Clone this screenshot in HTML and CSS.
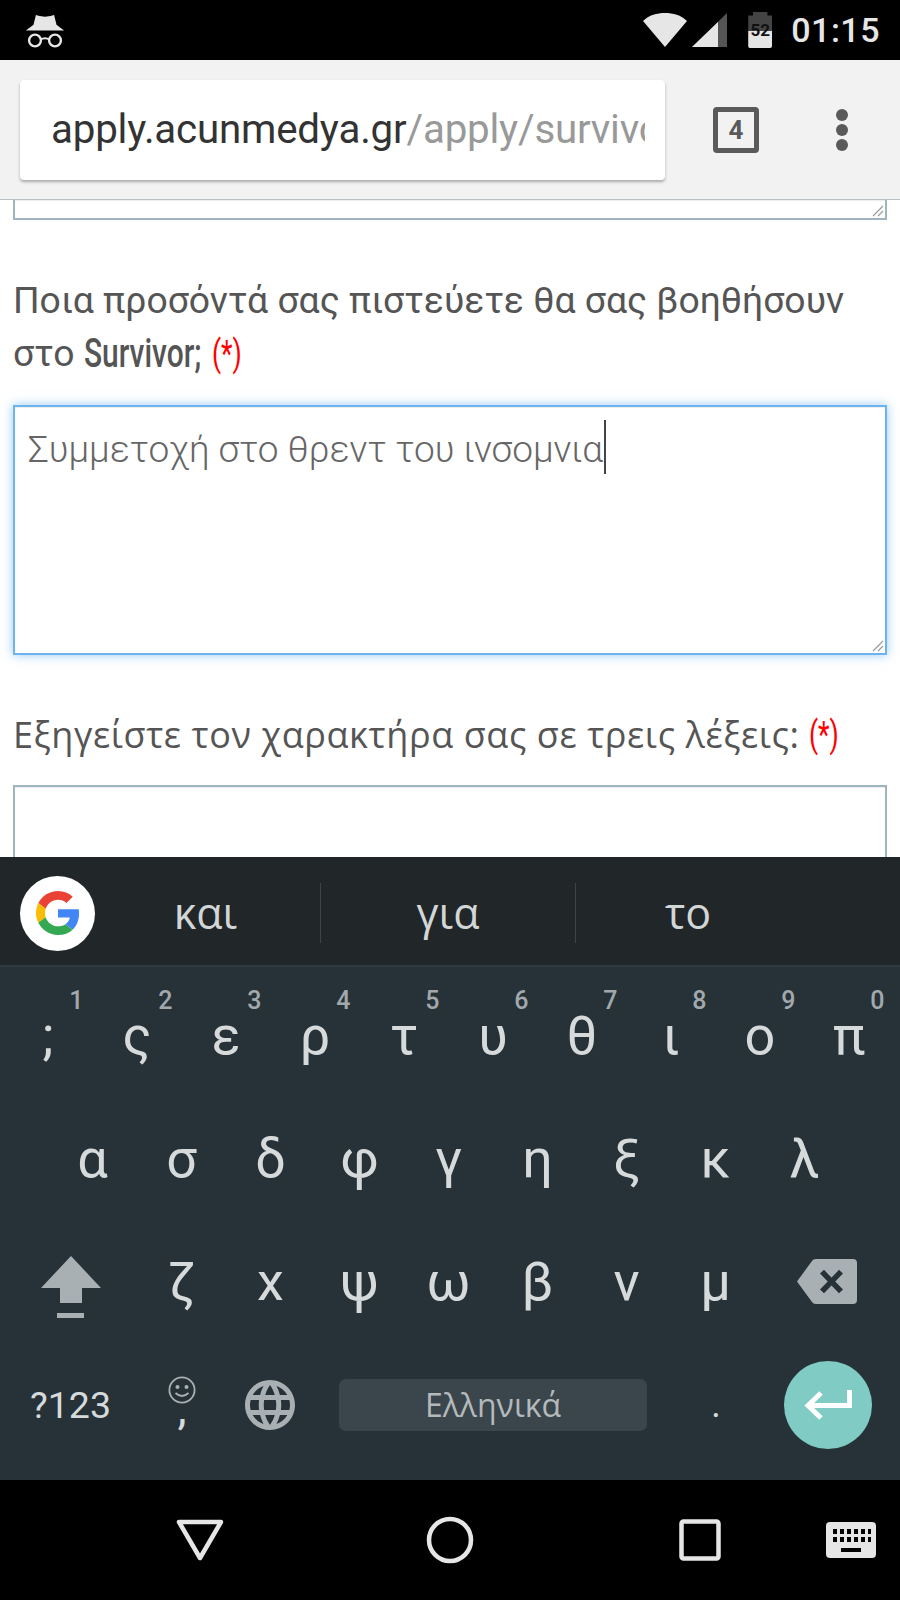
FILE: index.html
```html
<!DOCTYPE html>
<html>
<head>
    <meta charset="utf-8">
    <title>apply.acunmedya.gr</title>
    <link rel="stylesheet" href="styles.css">
</head>
<body>
<div class="phone">
    <div class="statusbar">
        <svg class="incognito" width="40" height="37" viewBox="0 0 44 40">
            <path d="M12 3 L16 4 L22 5 L28 4 L32 3 L35 15 H9 Z" fill="#e6e6e6"/>
            <path d="M1 20 L9 14 H35 L43 20 Z" fill="#e6e6e6"/>
            <circle cx="11" cy="31" r="6.5" fill="none" stroke="#e6e6e6" stroke-width="2.6"/>
            <circle cx="33" cy="31" r="6.5" fill="none" stroke="#e6e6e6" stroke-width="2.6"/>
            <path d="M17 30 Q22 27 27 30" fill="none" stroke="#e6e6e6" stroke-width="2.2"/>
        </svg>
        <div class="status-right">
            <svg width="44" height="36" viewBox="0 0 44 36">
                <path d="M22 35 L0 9 C6 3 14 1 22 1 C30 1 38 3 44 9 Z" fill="#e6e6e6"/>
            </svg>
            <svg class="signal" width="35" height="36" viewBox="0 0 35 36">
                <path d="M0 35 L35 1 V35 Z" fill="#555"/>
                <path d="M0 35 L26 10 V35 Z" fill="#e6e6e6"/>
            </svg>
            <div class="battery"><span class="battery-level">52</span></div>
            <span class="clock">01:15</span>
        </div>
    </div>

    <div class="toolbar">
        <div class="urlbar">
            <div class="url"><span class="host">apply.acunmedya.gr</span><span class="path">/apply/survivor</span></div>
        </div>
        <div class="tabs">4</div>
        <div class="menu"><i></i><i></i><i></i></div>
    </div>

    <div class="content">
        <div class="box stub"><svg class="grip" width="12" height="12" viewBox="0 0 12 12"><path d="M1 11 L11 1 M6 11 L11 6" stroke="#9a9a9a" stroke-width="1.2"/></svg></div>
        <div class="label first">
            <div class="line">Ποια προσόντά σας πιστεύετε θα σας βοηθήσουν</div>
            <div class="line"><span>στο</span><span class="narrow survivor">Survivor;</span><span class="narrow req">(*)</span></div>
        </div>
        <div class="box focused">Συμμετοχή στο θρεντ του ινσομνια<span class="caret"></span>
            <svg class="grip" width="12" height="12" viewBox="0 0 12 12"><path d="M1 11 L11 1 M6 11 L11 6" stroke="#9a9a9a" stroke-width="1.2"/></svg>
        </div>
        <div class="label second">
            <div class="line"><span>Εξηγείστε τον χαρακτήρα σας σε τρεις λέξεις:</span><span class="narrow req">(*)</span></div>
        </div>
        <div class="box next"></div>
    </div>

    <div class="suggestions">
        <div class="glogo">
            <svg width="44" height="44" viewBox="0 0 48 48">
                <path fill="#EA4335" d="M24 9.5c3.54 0 6.71 1.22 9.21 3.6l6.85-6.85C35.9 2.38 30.47 0 24 0 14.62 0 6.51 5.38 2.56 13.22l7.98 6.19C12.43 13.72 17.74 9.5 24 9.5z"/>
                <path fill="#4285F4" d="M46.98 24.55c0-1.57-.15-3.09-.38-4.55H24v9.02h12.94c-.58 2.96-2.26 5.48-4.78 7.18l7.73 6c4.51-4.18 7.09-10.36 7.09-17.65z"/>
                <path fill="#FBBC05" d="M10.53 28.59c-.48-1.45-.76-2.99-.76-4.59s.27-3.14.76-4.59l-7.98-6.19C.92 16.46 0 20.12 0 24c0 3.88.92 7.54 2.56 10.78l7.97-6.19z"/>
                <path fill="#34A853" d="M24 48c6.48 0 11.93-2.13 15.89-5.81l-7.73-6c-2.15 1.45-4.92 2.3-8.16 2.3-6.26 0-11.57-4.22-13.47-9.91l-7.98 6.19C6.51 42.62 14.62 48 24 48z"/>
            </svg>
        </div>
        <div class="word w1">και</div>
        <div class="word w2">για</div>
        <div class="word w3">το</div>
    </div>

    <div class="keyboard">
        <div class="row">
            <div class="key"><sup>1</sup>;</div>
            <div class="key"><sup>2</sup>ς</div>
            <div class="key"><sup>3</sup>ε</div>
            <div class="key"><sup>4</sup>ρ</div>
            <div class="key"><sup>5</sup>τ</div>
            <div class="key"><sup>6</sup>υ</div>
            <div class="key"><sup>7</sup>θ</div>
            <div class="key"><sup>8</sup>ι</div>
            <div class="key"><sup>9</sup>ο</div>
            <div class="key"><sup>0</sup>π</div>
        </div>
        <div class="row row-home">
            <div class="key">α</div>
            <div class="key">σ</div>
            <div class="key">δ</div>
            <div class="key">φ</div>
            <div class="key">γ</div>
            <div class="key">η</div>
            <div class="key">ξ</div>
            <div class="key">κ</div>
            <div class="key">λ</div>
        </div>
        <div class="row">
            <div class="key wide">
                <svg class="shift" width="60" height="62" viewBox="0 0 60 62">
                    <path d="M30 0 L60 32 H41 V47 H19 V32 H0 Z" fill="#a9b0b3"/>
                    <rect x="16" y="57" width="27" height="5" fill="#a9b0b3"/>
                </svg>
            </div>
            <div class="key">ζ</div>
            <div class="key">x</div>
            <div class="key">ψ</div>
            <div class="key">ω</div>
            <div class="key">β</div>
            <div class="key">ν</div>
            <div class="key">μ</div>
            <div class="key wide">
                <svg class="backspace" width="60" height="45" viewBox="0 0 60 46" preserveAspectRatio="none">
                    <path d="M15 2 Q16 0 19 0 H56 Q60 0 60 4 V42 Q60 46 56 46 H19 Q16 46 15 44 L0 23 Z" fill="#a9b0b3"/>
                    <path d="M25 13 L44 33 M44 13 L25 33" stroke="#263238" stroke-width="5.5" fill="none"/>
                </svg>
            </div>
        </div>
        <div class="row row-bottom">
            <div class="key symbols">?123</div>
            <div class="key emoji">
                <svg width="28" height="28" viewBox="0 0 28 28">
                    <circle cx="14" cy="14" r="12.6" fill="none" stroke="#a9b0b3" stroke-width="1.8"/>
                    <circle cx="9.5" cy="11" r="2" fill="#a9b0b3"/>
                    <circle cx="18.5" cy="11" r="2" fill="#a9b0b3"/>
                    <path d="M7.5 17 Q14 23 20.5 17" fill="none" stroke="#a9b0b3" stroke-width="1.8"/>
                </svg>
                <span class="comma">,</span>
            </div>
            <div class="key">
                <svg width="60" height="60" viewBox="0 0 24 24">
                    <path fill="#a9b0b3" d="M11.99 2C6.47 2 2 6.48 2 12s4.47 10 9.99 10C17.52 22 22 17.52 22 12S17.52 2 11.99 2zm6.93 6h-2.95c-.32-1.25-.78-2.45-1.38-3.56 1.84.63 3.37 1.91 4.33 3.56zM12 4.04c.83 1.2 1.48 2.53 1.91 3.96h-3.82c.43-1.43 1.08-2.76 1.91-3.96zM4.26 14C4.1 13.36 4 12.69 4 12s.1-1.36.26-2h3.38c-.08.66-.14 1.32-.14 2 0 .68.06 1.34.14 2H4.26zm.82 2h2.95c.32 1.25.78 2.45 1.38 3.56-1.84-.63-3.37-1.9-4.33-3.56zm2.95-8H5.08c.96-1.66 2.49-2.93 4.33-3.56C8.81 5.55 8.35 6.75 8.03 8zM12 19.96c-.83-1.2-1.48-2.53-1.91-3.96h3.82c-.43 1.43-1.08 2.76-1.91 3.96zM14.34 14H9.66c-.09-.66-.16-1.32-.16-2 0-.68.07-1.35.16-2h4.68c.09.65.16 1.32.16 2 0 .68-.07 1.34-.16 2zm.25 5.56c.6-1.11 1.06-2.31 1.38-3.56h2.95c-.96 1.65-2.49 2.93-4.33 3.56zM16.36 14c.08-.66.14-1.32.14-2 0-.68-.06-1.34-.14-2h3.38c.16.64.26 1.31.26 2s-.1 1.36-.26 2h-3.38z"/>
                </svg>
            </div>
            <div class="key space-key"><div class="spacebar">Ελληνικά</div></div>
            <div class="key dot">.</div>
            <div class="key enter-key">
                <div class="enter">
                    <svg width="48" height="30" viewBox="0 0 48 30">
                        <path d="M45.5 0 V15.5 H5 M17 3 L4 15.5 L17 28" fill="none" stroke="#fff" stroke-width="5"/>
                    </svg>
                </div>
            </div>
        </div>
    </div>

    <div class="navbar">
        <svg class="nav-back" width="48" height="42" viewBox="0 0 48 42">
            <path d="M3 3 H45 L24 39 Z" fill="none" stroke="#e6e6e6" stroke-width="4.5" stroke-linejoin="round"/>
        </svg>
        <svg class="nav-home" width="48" height="48" viewBox="0 0 48 48">
            <circle cx="24" cy="24" r="21" fill="none" stroke="#e6e6e6" stroke-width="4.5"/>
        </svg>
        <svg class="nav-recent" width="42" height="42" viewBox="0 0 42 42">
            <rect x="2.5" y="2.5" width="37" height="37" rx="2" fill="none" stroke="#e6e6e6" stroke-width="4.5"/>
        </svg>
        <svg class="nav-kbd" width="50" height="36" viewBox="0 0 50 36">
            <rect width="50" height="36" rx="4" fill="#e6e6e6"/>
            <path d="M7 7h4v5H7zM14 7h4v5h-4zM21 7h4v5h-4zM28 7h4v5h-4zM35 7h4v5h-4zM42 7h3v5h-3zM7 15h4v5H7zM14 15h4v5h-4zM21 15h4v5h-4zM28 15h4v5h-4zM35 15h4v5h-4zM42 15h3v5h-3zM15 26h20v4H15z" fill="#000"/>
        </svg>
    </div>
</div>
</body>
</html>
```

FILE: styles.css
```css
* {
    box-sizing: border-box;
}
body {
    margin: 0;
    background-color: #000;
}
.phone {
    width: 900px;
    height: 1600px;
    display: flex;
    flex-direction: column;
    overflow: hidden;
    font-family: Roboto, sans-serif;
}

/* status bar */
.statusbar {
    height: 60px;
    flex: none;
    background-color: #000;
    display: flex;
    justify-content: space-between;
    align-items: center;
    padding: 0 20px 0 25px;
}
.status-right {
    display: flex;
    align-items: center;
    color: #e6e6e6;
}
.signal {
    margin-left: 5px;
}
.battery {
    position: relative;
    width: 24px;
    height: 36px;
    margin-left: 21px;
    border-radius: 2px;
    background: linear-gradient(#444 0, #444 53%, #e6e6e6 53%);
    clip-path: polygon(20% 0, 80% 0, 80% 10%, 100% 10%, 100% 100%, 0 100%, 0 10%, 20% 10%);
}
.battery-level {
    position: absolute;
    left: 0;
    right: 0;
    top: 8px;
    text-align: center;
    font-size: 17px;
    line-height: 20px;
    font-weight: 700;
    color: #111;
}
.clock {
    margin-left: 19px;
    font-size: 34px;
    font-weight: 500;
    letter-spacing: 0.5px;
}

/* browser toolbar */
.toolbar {
    height: 140px;
    flex: none;
    background-color: #f2f2f2;
    border-bottom: 1px solid #b9c0c4;
    display: flex;
    align-items: center;
    padding-left: 20px;
}
.urlbar {
    width: 645px;
    height: 100px;
    background-color: #fff;
    border-radius: 4px;
    box-shadow: 0 2px 3px rgba(0,0,0,0.3);
    padding: 0 20px 0 31px;
    display: flex;
    align-items: center;
}
.url {
    overflow: hidden;
    white-space: nowrap;
    font-size: 40.3px;
    letter-spacing: -0.2px;
}
.host {
    color: #333;
}
.path {
    color: #999;
}
.tabs {
    width: 46px;
    height: 46px;
    margin-left: 48px;
    border: 5px solid #5a5a5a;
    border-radius: 4px;
    color: #5a5a5a;
    font-size: 26px;
    font-weight: 700;
    line-height: 36px;
    text-align: center;
}
.menu {
    margin-left: 77px;
    display: flex;
    flex-direction: column;
    gap: 3px;
}
.menu i {
    display: block;
    width: 12px;
    height: 12px;
    border-radius: 50%;
    background-color: #5a5a5a;
}

/* page */
.content {
    height: 657px;
    flex: none;
    background-color: #fff;
    padding: 0 13px;
    overflow: hidden;
    color: #555;
}
.box {
    position: relative;
    background-color: #fff;
    border: 2px solid #a0b4c0;
    box-shadow: inset 0 1px 1px rgba(0,0,0,0.075);
}
.stub {
    height: 20px;
    border-top: none;
}
.focused {
    height: 250px;
    padding: 11px 13px;
    border-color: #6db3ee;
    box-shadow: inset 0 1px 1px rgba(0,0,0,0.075), 0 0 10px rgba(82,168,236,0.6);
    font-size: 37px;
    font-weight: 300;
    line-height: 64px;
    color: #666;
    white-space: nowrap;
}
.next {
    height: 90px;
}
.grip {
    position: absolute;
    right: 1px;
    bottom: 1px;
}
.caret {
    display: inline-block;
    width: 2px;
    height: 54px;
    margin-left: 1px;
    background-color: #444;
    vertical-align: -12px;
}
.label {
    font-size: 37.3px;
    line-height: 53px;
}
.first {
    margin-top: 54px;
    margin-bottom: 25px;
}
.second {
    margin-top: 52px;
    margin-bottom: 23px;
    font-family: "Open Sans", sans-serif;
    font-size: 36px;
    line-height: 55px;
    letter-spacing: 0.6px;
}
.line {
    display: flex;
    gap: 9px;
    white-space: nowrap;
}
.narrow {
    display: inline-block;
    font-family: Roboto, sans-serif;
    letter-spacing: 0;
    transform-origin: left center;
}
.survivor {
    width: 119px;
    font-size: 41px;
    font-weight: 500;
    transform: scaleX(0.73);
}
.req {
    width: 30px;
    color: red;
    font-size: 37px;
    font-weight: 400;
    transform: scaleX(0.72);
}

/* keyboard */
.suggestions {
    height: 110px;
    flex: none;
    background-color: #212629;
    border-bottom: 2px solid #2f3a40;
    display: flex;
    align-items: center;
    padding: 4px 0 0 20px;
    color: #d3d6d7;
    font-family: "Open Sans", sans-serif;
    font-size: 43px;
}
.glogo {
    width: 75px;
    height: 75px;
    flex: none;
    border-radius: 50%;
    background-color: #fff;
    display: flex;
    align-items: center;
    justify-content: center;
    margin-right: 12px;
}
.word {
    height: 60px;
    line-height: 60px;
    text-align: center;
}
.w1 {
    width: 214px;
    padding-right: 16px;
    border-right: 1px solid #3e4549;
}
.w2 {
    width: 255px;
    border-right: 1px solid #3e4549;
}
.w3 {
    width: 224px;
}
.keyboard {
    height: 513px;
    flex: none;
    background-color: #263238;
    padding-top: 7px;
    color: #d7dadb;
    font-size: 54px;
}
.row {
    height: 123px;
    padding-right: 3px;
    display: flex;
    justify-content: center;
}
.key {
    position: relative;
    width: 89px;
    flex: none;
    display: flex;
    align-items: center;
    justify-content: center;
}
.key sup {
    position: absolute;
    right: 9px;
    top: 15px;
    font-size: 25px;
    font-weight: 500;
    line-height: 24px;
    color: #a2a8ac;
}
.wide {
    width: 135px;
}
.shift {
    margin-top: 10px;
    margin-left: 2px;
}
.backspace {
    margin-right: 1px;
}
.row-bottom {
    padding-right: 0;
}
.row-bottom .key {
    width: 90px;
}
.row-bottom .symbols {
    width: 135px;
    padding-left: 6px;
    font-size: 37.5px;
}
.row-bottom .emoji {
    flex-direction: column;
    padding-left: 4px;
    font-size: 46px;
}
.comma {
    height: 30px;
    line-height: 8px;
}
.row-bottom .space-key {
    width: 356px;
}
.spacebar {
    width: 308px;
    height: 52px;
    border-radius: 7px;
    background-color: #3a454c;
    color: #b4b9bb;
    font-family: "Open Sans", sans-serif;
    font-size: 32px;
    line-height: 52px;
    text-align: center;
}
.row-bottom .dot {
    font-size: 36px;
}
.row-bottom .enter-key {
    width: 139px;
    justify-content: flex-start;
    padding-left: 23px;
}
.enter {
    width: 88px;
    height: 88px;
    flex: none;
    border-radius: 50%;
    background-color: #80cbc4;
    display: flex;
    align-items: center;
    justify-content: center;
}

/* nav bar */
.navbar {
    flex: 1;
    background-color: #000;
    display: flex;
    align-items: center;
    padding-left: 176px;
}
.nav-home {
    margin-left: 202px;
}
.nav-recent {
    margin-left: 205px;
}
.nav-kbd {
    margin-left: 105px;
}
```
